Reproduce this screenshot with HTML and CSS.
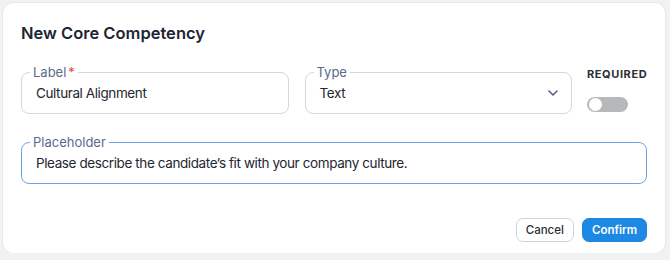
FILE: index.html
```html
<!DOCTYPE html>
<html lang="en">
<head>
    <meta charset="UTF-8">
    <meta name="viewport" content="width=device-width, initial-scale=1.0">
    <title>New Core Competency</title>
    <link rel="stylesheet" href="styles.css">
</head>
<body>
    <div class="dialog">
        <h2 class="dialog-title">New Core Competency</h2>

        <div class="field-row">
            <fieldset class="field">
                <legend>Label<span class="required-mark">*</span></legend>
                <div class="field-value">Cultural Alignment</div>
            </fieldset>

            <fieldset class="field">
                <legend>Type</legend>
                <div class="field-value select-value">
                    <span>Text</span>
                    <svg class="chevron" width="10" height="6" viewBox="0 0 10 6">
                        <path d="M1 1 L5 5 L9 1" fill="none" stroke="#4a5a7a" stroke-width="1.5" stroke-linecap="round" stroke-linejoin="round"/>
                    </svg>
                </div>
            </fieldset>

            <div class="required-box">
                <div class="required-title">REQUIRED</div>
                <div class="toggle"><div class="toggle-knob"></div></div>
            </div>
        </div>

        <div class="field-row">
            <fieldset class="field field-focused">
                <legend>Placeholder</legend>
                <div class="field-value">Please describe the candidate’s fit with your company culture.</div>
            </fieldset>
        </div>

        <div class="dialog-actions">
            <button class="btn btn-cancel">Cancel</button>
            <button class="btn btn-confirm">Confirm</button>
        </div>
    </div>
</body>
</html>
```

FILE: styles.css
```css
* {
    margin: 0;
    padding: 0;
    box-sizing: border-box;
}

body {
    font-family: 'Inter', 'Noto Sans', sans-serif;
    background: #f1f2f4;
    color: #1f2430;
}

.dialog {
    margin: 3px 0 0 3px;
    width: 662px;
    height: 250px;
    background: #fff;
    border-radius: 10px;
    box-shadow: 0 0 0 1px #e6e8ec;
    padding: 18px 18px 12px 18px;
}

.dialog-title {
    font-size: 16.5px;
    line-height: 24px;
    font-weight: 600;
    color: #1e2533;
    margin-bottom: 19px;
}

.field-row {
    display: flex;
    gap: 16px;
    margin-bottom: 20px;
}

.field {
    flex: 1;
    border: 1px solid #d3d7de;
    border-radius: 8px;
    padding: 0;
    min-width: 0;
}

.field legend {
    margin-left: 8px;
    padding: 0 3px;
    font-size: 13px;
    line-height: 16px;
    color: #5a6a8c;
}

.required-mark {
    color: #e5483d;
    margin-left: 2px;
}

.field-value {
    padding: 4px 14px 11px 14px;
    font-size: 13.5px;
    letter-spacing: -0.4px;
    line-height: 18px;
    color: #23272f;
    white-space: nowrap;
}

.select-value {
    display: flex;
    justify-content: space-between;
    align-items: center;
    padding-right: 13px;
}

.field-focused {
    border-color: #6aa7e2;
}

.required-box {
    width: 60px;
    padding-top: 3px;
    margin-left: -1px;
}

.required-title {
    font-size: 11px;
    font-weight: 700;
    letter-spacing: 0.6px;
    color: #2b2f36;
    line-height: 14px;
    margin-bottom: 16px;
}

.toggle {
    width: 41px;
    height: 15px;
    border-radius: 8px;
    background: #b7b8ba;
    padding: 1px 2px;
}

.toggle-knob {
    width: 13px;
    height: 13px;
    border-radius: 50%;
    background: #fff;
}

.dialog-actions {
    margin-top: 34px;
    display: flex;
    justify-content: flex-end;
    gap: 8px;
}

.btn {
    font-family: 'Inter', 'Noto Sans', sans-serif;
    font-size: 11.5px;
    height: 24px;
    padding: 0 9px;
    border-radius: 7px;
    cursor: pointer;
}

.btn-cancel {
    background: #fff;
    border: 1px solid #cfd4dc;
    color: #2a2e35;
    font-weight: 500;
}

.btn-confirm {
    background: #1e88e5;
    border: 1px solid #1e88e5;
    color: #fff;
    font-weight: 600;
}
```
